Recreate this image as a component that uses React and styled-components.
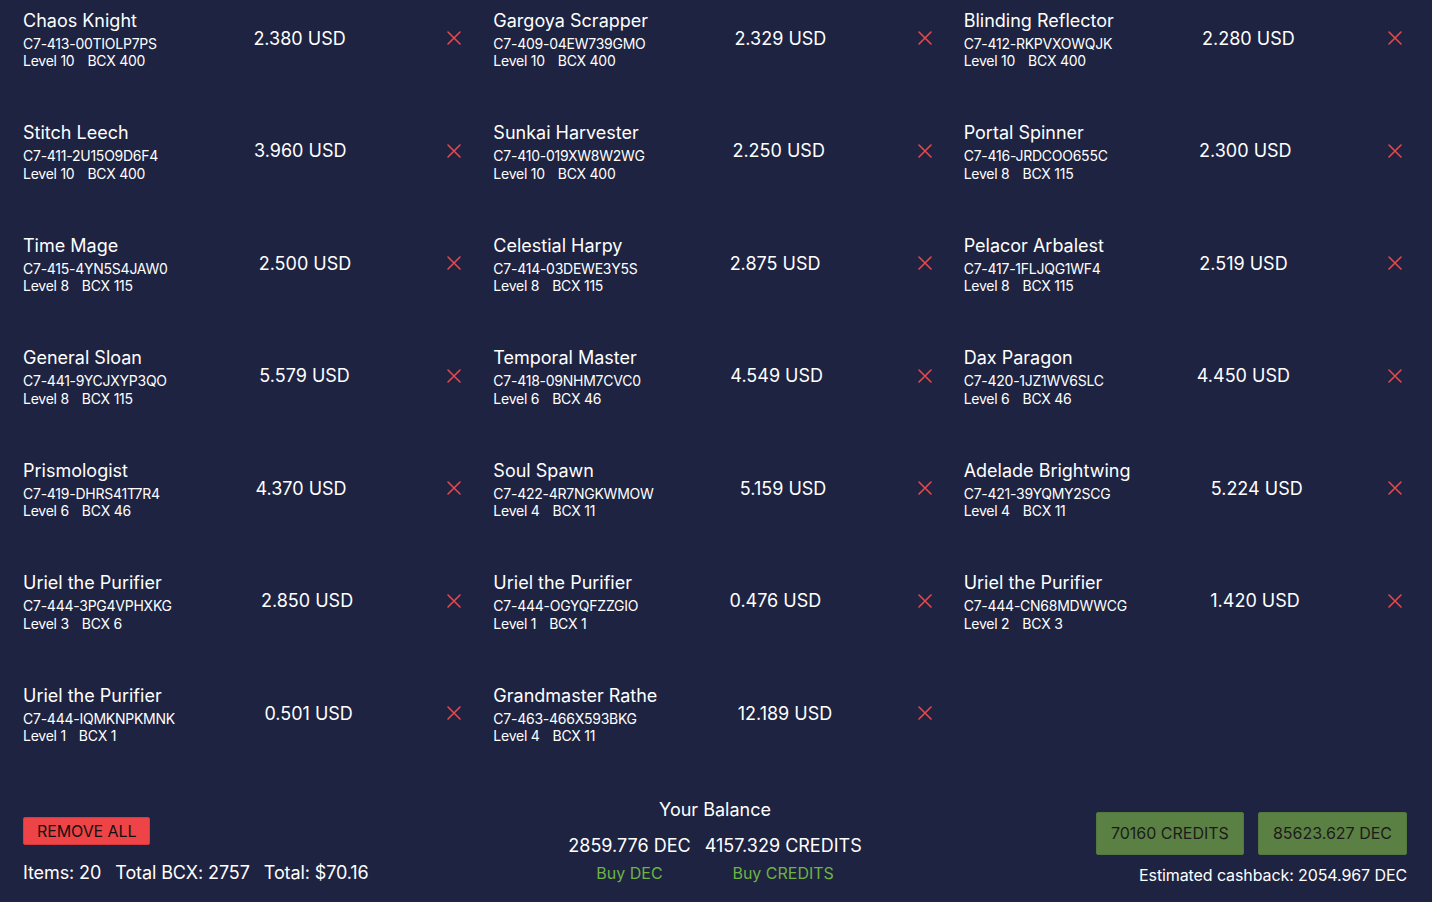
import React from 'react'
import styled, { createGlobalStyle } from 'styled-components'

const GlobalStyle = createGlobalStyle`
    body {
        margin: 0;
        background: #1e2341;
        font-family: Inter, "Noto Sans", sans-serif;
        color: #fff;
    }
`

const Page = styled.div`
    min-height: 902px;
    padding: 0 25px 0 23px;
    box-sizing: border-box;
`

const CardGrid = styled.div`
    display: grid;
    grid-template-columns: repeat(3, 1fr);
    column-gap: 27px;
    grid-auto-rows: 112.5px;
`

const Card = styled.div`
    display: flex;
    align-items: center;
    justify-content: space-between;
    padding: 6px 0 42px;
`

const Info = styled.div`
    display: flex;
    flex-direction: column;
`

const Name = styled.div`
    font-size: 18px;
    line-height: 27px;
    margin-bottom: 1px;
`

const Meta = styled.div`
    font-size: 14px;
    line-height: 17.5px;
    letter-spacing: -0.25px;
`

const Bcx = styled.span`
    margin-left: 13px;
`

const Price = styled.div`
    font-size: 18px;
`

const RemoveButton = styled.button`
    width: 24px;
    height: 24px;
    padding: 0;
    border: none;
    background: none;
    cursor: pointer;
    display: flex;
`

const Footer = styled.div`
    display: grid;
    grid-template-columns: 1fr auto 1fr;
    padding-top: 11px;
`

const LeftCol = styled.div`
    display: flex;
    flex-direction: column;
    align-items: flex-start;
`

const RemoveAll = styled.button`
    margin-top: 18px;
    height: 28px;
    padding: 0 13px;
    background: #ef4447;
    border: 1px solid #d63a3d;
    border-radius: 2px;
    font-family: inherit;
    font-size: 16px;
    letter-spacing: -0.1px;
    color: #111;
    cursor: pointer;
`

const Totals = styled.div`
    margin-top: 17px;
    font-size: 18px;
    letter-spacing: -0.1px;
    display: flex;
    gap: 14px;
`

const CenterCol = styled.div`
    display: flex;
    flex-direction: column;
    align-items: center;
`

const BalanceTitle = styled.div`
    font-size: 18px;
    line-height: 22px;
`

const BalanceRow = styled.div`
    display: flex;
    gap: 14px;
    margin-top: 14px;
`

const BalanceItem = styled.div`
    display: flex;
    flex-direction: column;
    align-items: center;
`

const Amount = styled.div`
    font-size: 18px;
    line-height: 22px;
`

const BuyLink = styled.a`
    margin-top: 6px;
    font-size: 16px;
    color: #6db344;
    text-decoration: none;
    cursor: pointer;
`

const RightCol = styled.div`
    display: flex;
    flex-direction: column;
    align-items: flex-end;
`

const Buttons = styled.div`
    display: flex;
    gap: 14px;
    margin-top: 13px;
`

const GreenButton = styled.button`
    height: 43px;
    padding: 0 14px;
    background: #5b8043;
    border: 1px solid #54773d;
    border-radius: 2px;
    font-family: inherit;
    font-size: 16px;
    color: #1b1b1b;
    cursor: pointer;
`

const Cashback = styled.div`
    margin-top: 10px;
    font-size: 16px;
    letter-spacing: -0.1px;
`

const cards = [
    ['Chaos Knight', 'C7-413-00TIOLP7PS', 10, 400, '2.380'],
    ['Gargoya Scrapper', 'C7-409-04EW739GMO', 10, 400, '2.329'],
    ['Blinding Reflector', 'C7-412-RKPVXOWQJK', 10, 400, '2.280'],
    ['Stitch Leech', 'C7-411-2U15O9D6F4', 10, 400, '3.960'],
    ['Sunkai Harvester', 'C7-410-019XW8W2WG', 10, 400, '2.250'],
    ['Portal Spinner', 'C7-416-JRDCOO655C', 8, 115, '2.300'],
    ['Time Mage', 'C7-415-4YN5S4JAW0', 8, 115, '2.500'],
    ['Celestial Harpy', 'C7-414-03DEWE3Y5S', 8, 115, '2.875'],
    ['Pelacor Arbalest', 'C7-417-1FLJQG1WF4', 8, 115, '2.519'],
    ['General Sloan', 'C7-441-9YCJXYP3QO', 8, 115, '5.579'],
    ['Temporal Master', 'C7-418-09NHM7CVC0', 6, 46, '4.549'],
    ['Dax Paragon', 'C7-420-1JZ1WV6SLC', 6, 46, '4.450'],
    ['Prismologist', 'C7-419-DHRS41T7R4', 6, 46, '4.370'],
    ['Soul Spawn', 'C7-422-4R7NGKWMOW', 4, 11, '5.159'],
    ['Adelade Brightwing', 'C7-421-39YQMY2SCG', 4, 11, '5.224'],
    ['Uriel the Purifier', 'C7-444-3PG4VPHXKG', 3, 6, '2.850'],
    ['Uriel the Purifier', 'C7-444-OGYQFZZGIO', 1, 1, '0.476'],
    ['Uriel the Purifier', 'C7-444-CN68MDWWCG', 2, 3, '1.420'],
    ['Uriel the Purifier', 'C7-444-IQMKNPKMNK', 1, 1, '0.501'],
    ['Grandmaster Rathe', 'C7-463-466X593BKG', 4, 11, '12.189'],
]

const CloseIcon = () => (
    <svg width="24" height="24" viewBox="0 0 24 24" fill="none" stroke="#e8484c" strokeWidth="1.6" strokeLinecap="round">
        <path d="M6 6l12 12M18 6L6 18" />
    </svg>
)

const App = () => (
    <Page>
        <GlobalStyle />
        <CardGrid>
            {cards.map(([name, id, level, bcx, price]) => (
                <Card key={id}>
                    <Info>
                        <Name>{name}</Name>
                        <Meta>{id}</Meta>
                        <Meta>
                            Level {level}
                            <Bcx>BCX {bcx}</Bcx>
                        </Meta>
                    </Info>
                    <Price>{price} USD</Price>
                    <RemoveButton>
                        <CloseIcon />
                    </RemoveButton>
                </Card>
            ))}
        </CardGrid>
        <Footer>
            <LeftCol>
                <RemoveAll>REMOVE ALL</RemoveAll>
                <Totals>
                    <span>Items: 20</span>
                    <span>Total BCX: 2757</span>
                    <span>Total: $70.16</span>
                </Totals>
            </LeftCol>
            <CenterCol>
                <BalanceTitle>Your Balance</BalanceTitle>
                <BalanceRow>
                    <BalanceItem>
                        <Amount>2859.776 DEC</Amount>
                        <BuyLink>Buy DEC</BuyLink>
                    </BalanceItem>
                    <BalanceItem>
                        <Amount>4157.329 CREDITS</Amount>
                        <BuyLink>Buy CREDITS</BuyLink>
                    </BalanceItem>
                </BalanceRow>
            </CenterCol>
            <RightCol>
                <Buttons>
                    <GreenButton>70160 CREDITS</GreenButton>
                    <GreenButton>85623.627 DEC</GreenButton>
                </Buttons>
                <Cashback>Estimated cashback: 2054.967 DEC</Cashback>
            </RightCol>
        </Footer>
    </Page>
)

export default App
